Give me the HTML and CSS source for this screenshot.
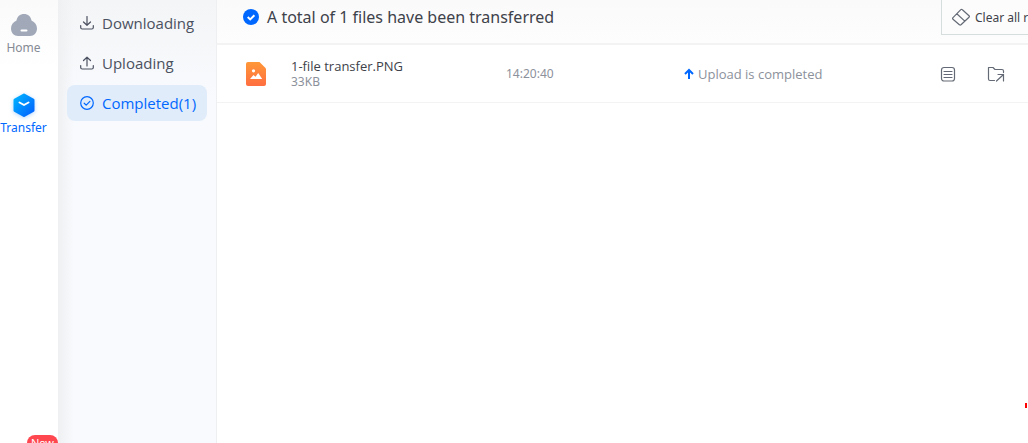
FILE: index.html
```html
<!DOCTYPE html>
<html lang="en">

<head>
    <meta charset="UTF-8">
    <title>Transfer</title>
    <link rel="stylesheet" href="styles.css">
</head>

<body>
<div class="app">
    <nav class="rail">
        <a class="rail-item" href="#">
            <svg width="28" height="24" viewBox="0 0 28 24">
                <path d="M14 1c4 0 7 2.700 7.500 6.600C25 9.200 27 12 27 15.500c0 4.500-3 7.500-7 7.500H8c-4 0-7-3-7-7.500C1 12 3 9.200 6.500 7.600 7 3.700 10 1 14 1z" fill="#a1a9b9"/>
                <path d="M11.500 17.500h5" stroke="#fff" stroke-width="2" stroke-linecap="round"/>
            </svg>
            <span>Home</span>
        </a>
        <a class="rail-item active" href="#">
            <svg width="28" height="24" viewBox="0 0 28 24">
                <defs>
                    <linearGradient id="cube" x1="0" y1="0" x2="1" y2="1">
                        <stop offset="0" stop-color="#00b4ff"/>
                        <stop offset="1" stop-color="#0060ff"/>
                    </linearGradient>
                </defs>
                <path d="M14 2l9 5v10.500L14 22.500 5 17.500V7z" fill="url(#cube)" stroke="url(#cube)" stroke-width="3" stroke-linejoin="round"/>
                <path d="M9.500 9.500L14 12l4.500-2.500" fill="none" stroke="#fff" stroke-width="2" stroke-linecap="round" stroke-linejoin="round"/>
            </svg>
            <span>Transfer</span>
        </a>
        <span class="badge">New</span>
    </nav>

    <aside class="sidebar">
        <a class="tab" href="#">
            <svg width="14" height="14" viewBox="0 0 14 14">
                <path d="M7 .5v8.500M3.500 6L7 9.300 10.500 6M.7 9.500v2q0 1.500 1.500 1.500h9.600q1.500 0 1.500-1.500v-2"/>
            </svg>
            Downloading
        </a>
        <a class="tab" href="#">
            <svg width="14" height="14" viewBox="0 0 14 14">
                <path d="M7 10V1.200M3.500 4.500L7 1.200l3.500 3.300M.7 9.500v2q0 1.500 1.500 1.500h9.600q1.500 0 1.500-1.500v-2"/>
            </svg>
            Uploading
        </a>
        <a class="tab active" href="#">
            <svg width="14" height="14" viewBox="0 0 14 14">
                <circle cx="7" cy="7" r="6.300"/>
                <path d="M4.200 7.200l2 1.900 3.700-3.700"/>
            </svg>
            Completed(1)
        </a>
    </aside>

    <main class="content">
        <header class="summary">
            <svg width="16" height="16" viewBox="0 0 16 16">
                <circle cx="8" cy="8" r="8" fill="#0068ff"/>
                <path d="M4.700 8l2.500 2.400L11.400 6.200" fill="none" stroke="#fff" stroke-width="2"/>
            </svg>
            <h1>A total of 1 files have been transferred</h1>
            <button class="clear-btn" type="button">
                <svg width="20" height="18" viewBox="0 0 20 18" class="line">
                    <path d="M2 9.700L9.800 1.700q.8-.8 1.600 0l6.600 6q.8.800 0 1.600l-8 7.400q-.8.800-1.600 0L2 11.300q-.8-.8 0-1.600zM5.800 5.800l8 7.300"/>
                </svg>
                Clear all records
            </button>
        </header>

        <div class="file-row">
            <div class="file">
                <svg width="20" height="24" viewBox="0 0 20 24">
                    <defs>
                        <linearGradient id="pic" x1="0" y1="0" x2="0" y2="1">
                            <stop offset="0" stop-color="#ff9838"/>
                            <stop offset="1" stop-color="#ff6e40"/>
                        </linearGradient>
                    </defs>
                    <path d="M2 0h11.500L20 6.500V22q0 2-2 2H2q-2 0-2-2V2q0-2 2-2z" fill="url(#pic)"/>
                    <circle cx="7.500" cy="8.800" r="1.600" fill="#fff"/>
                    <path d="M4 17l3.500-4 2 1.800L12.200 11l4 6z" fill="#fff"/>
                </svg>
                <div class="file-info">
                    <div class="file-name">1-file transfer.PNG</div>
                    <div class="file-size">33KB</div>
                </div>
            </div>
            <div class="time">14:20:40</div>
            <div class="status">
                <svg width="10" height="12" viewBox="0 0 10 12">
                    <path d="M5 11V2M1 6l4-4 4 4" fill="none" stroke="#0068ff" stroke-width="2"/>
                </svg>
                Upload is completed
            </div>
            <div class="actions">
                <button class="icon-btn" type="button" aria-label="Details">
                    <svg width="16" height="16" viewBox="0 0 16 16" class="line">
                        <rect x="1.500" y="1.500" width="13" height="13.500" rx="2.500"/>
                        <path d="M4 5.500h8M4 8.500h8M4 11.500h8"/>
                    </svg>
                </button>
                <button class="icon-btn" type="button" aria-label="Open folder">
                    <svg width="18" height="16" viewBox="0 0 18 16" class="line">
                        <path d="M7.500 14.500H3q-1.500 0-1.500-1.500V1.500h4.500l2 2h7q1.500 0 1.500 1.500v1.500M9.500 15l7-6.500M11 8.500h5.500V15"/>
                    </svg>
                </button>
            </div>
        </div>
        <span class="mark"></span>
    </main>
</div>
</body>

</html>
```
FILE: styles.css
```css
body {
    margin: 0;
    font-family: "Noto Sans", "Segoe UI", sans-serif;
    font-size: 12px;
    color: #3e424a;
    background-color: #fff;
}

a {
    color: inherit;
    text-decoration: none;
}

svg {
    flex: none;
}

button {
    font-family: inherit;
    cursor: pointer;
}

.app {
    position: relative;
    display: flex;
    height: 100vh;
    overflow: hidden;
}

/* left rail */
.rail {
    position: relative;
    flex: none;
    width: 58px;
    background: linear-gradient(#fafafa, #fff 70px);
}

.rail-item {
    display: flex;
    flex-direction: column;
    align-items: center;
    width: 47px;
    height: 67px;
    padding-top: 13px;
    color: #858a94;
}

.rail-item span {
    line-height: 22px;
}

.rail-item.active {
    color: #0068ff;
}

.rail-item.active svg {
    filter: drop-shadow(0 1px 2px rgba(0, 120, 255, 0.3));
}

.badge {
    position: absolute;
    right: 0;
    bottom: -8px;
    width: 31px;
    height: 16px;
    border-radius: 8px;
    background-color: #ff4750;
    color: #fff;
    font-size: 11px;
    line-height: 16px;
    text-align: center;
}

/* transfer tabs */
.sidebar {
    flex: none;
    display: flex;
    flex-direction: column;
    gap: 4px;
    box-sizing: border-box;
    width: 159px;
    padding: 5px 9px;
    border-right: 1px solid #eeeff1;
    background: linear-gradient(90deg, #eff0f2, rgba(247, 249, 252, 0) 16px), linear-gradient(#f4f5f7, #f8fafd 100px);
}

.tab {
    display: flex;
    align-items: center;
    gap: 8px;
    height: 36px;
    padding-left: 13px;
    border-radius: 8px;
    font-family: "Open Sans", "Segoe UI", sans-serif;
    font-size: 15px;
    color: #4b5160;
}

.tab svg {
    fill: none;
    stroke: currentColor;
    stroke-width: 1.2;
    stroke-linecap: round;
    stroke-linejoin: round;
}

.tab.active {
    background-color: #e0ecfa;
    color: #0068ff;
}

/* main list */
.content {
    flex: 1;
    min-width: 0;
}

.summary {
    display: flex;
    align-items: flex-start;
    height: 43px;
    padding-left: 26px;
    border-bottom: 2px solid #f3f3f4;
    background: linear-gradient(#fafafa, #fdfdfd);
}

.summary > svg {
    margin-top: 9px;
}

.summary h1 {
    flex: 1;
    margin: 0 0 0 8px;
    font-size: 16px;
    font-weight: 400;
    line-height: 34px;
    white-space: nowrap;
}

.clear-btn {
    flex: none;
    display: flex;
    align-items: center;
    gap: 4px;
    width: 140px;
    height: 35px;
    margin-right: -53px;
    padding: 0 9px;
    border: 1px solid #d5dddd;
    border-top: none;
    background-color: #fcfcfc;
    color: #3e424a;
    font-size: 12px;
    white-space: nowrap;
}

.line {
    fill: none;
    stroke: #646a75;
    stroke-width: 1.2;
    stroke-linecap: round;
    stroke-linejoin: round;
}

.file-row {
    display: grid;
    grid-template-columns: 260px 178px 1fr auto;
    align-items: center;
    height: 57px;
    padding: 0 23px 0 29px;
    border-bottom: 1px solid #f3f3f4;
    color: #8c919b;
}

.file {
    display: flex;
    align-items: center;
    gap: 25px;
}

.file-info {
    line-height: 16px;
}

.file-name,
.status {
    font-family: "Open Sans", "Segoe UI", sans-serif;
    font-size: 13px;
}

.file-name {
    color: #3e424a;
}

.status {
    display: flex;
    align-items: center;
    gap: 4px;
}

.actions {
    display: flex;
    gap: 31px;
}

.icon-btn {
    display: flex;
    padding: 0;
    border: none;
    background: none;
}

.mark {
    position: absolute;
    right: 1px;
    top: 403px;
    width: 2px;
    height: 5px;
    background-color: #f00;
}
```
